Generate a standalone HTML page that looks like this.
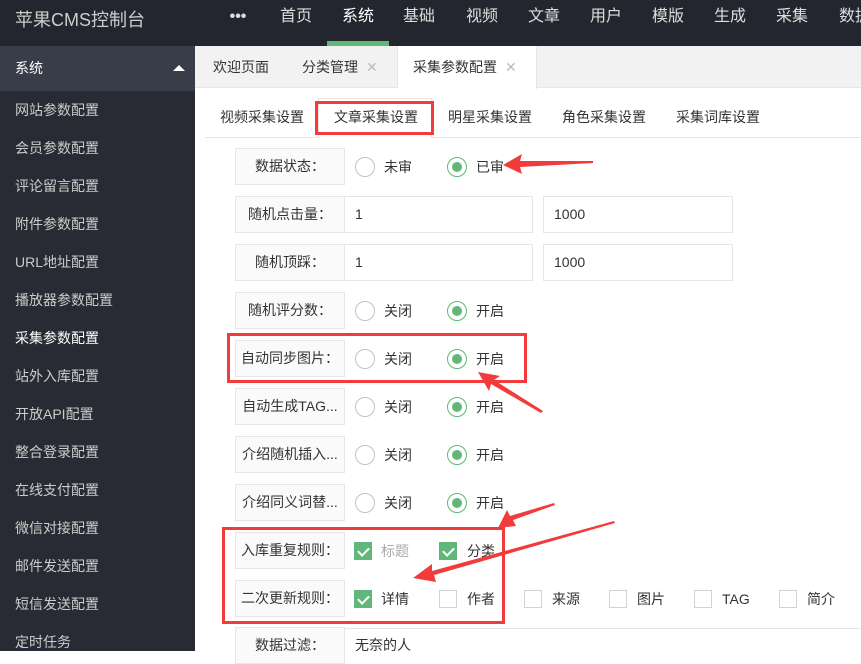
<!DOCTYPE html><html><head><meta charset="utf-8"><style>
*{margin:0;padding:0;box-sizing:border-box}
body{width:861px;height:651px;overflow:hidden;position:relative;background:#fff;font-family:"Liberation Sans","Noto Sans CJK SC",sans-serif;font-size:14px;color:#333}
.top{position:absolute;left:0;top:0;width:861px;height:46px;background:#23262e}
.logo{position:absolute;left:15px;top:6px;color:#ccc;font-size:18px}
.nav{position:absolute;top:0;height:46px;line-height:34px;color:#ddd;font-size:16px;transform:translateX(-50%);white-space:nowrap}
.side{position:absolute;left:0;top:46px;width:195px;height:605px;background:#282b33}
.side .h{height:45px;background:#393d49;color:#fff;padding-left:15px;line-height:45px;font-size:14px}
.side .h:after{content:"";position:absolute;left:173px;top:19px;border:6px solid transparent;border-bottom:6px solid #fff;border-top:0}
.side .i{position:absolute;left:15px;color:#ccc;font-size:14px;line-height:20px}
.tabs{position:absolute;left:195px;top:46px;width:666px;height:42px;background:#f2f2f2;border-bottom:1px solid #e6e6e6}
.tab{position:absolute;top:0;height:42px;line-height:42px;font-size:14px;color:#333}
.x{color:#bbb;margin-left:8px}
.st{position:absolute;top:107px;font-size:14px;color:#333;line-height:20px}
.lbl{position:absolute;left:235px;width:110px;height:37px;border:1px solid #e6e6e6;background:#fafafa;text-align:center;line-height:35px;font-size:14px;white-space:nowrap;overflow:hidden}
.inp{position:absolute;height:37px;border:1px solid #e6e6e6;padding-left:10px;line-height:35px}
.r{position:absolute;width:20px;height:20px;border:1px solid #c2c2c2;border-radius:50%}
.r.on{border-color:#5fb878}.r.on:after{content:"";position:absolute;left:4px;top:4px;width:10px;height:10px;border-radius:50%;background:#5fb878}
.t{position:absolute;font-size:14px;line-height:20px}
.c{position:absolute;width:18px;height:18px;border:1px solid #d2d2d2}
.c.on{background:#5fb878;border-color:#5fb878}
.c.on:after{content:"";position:absolute;left:5px;top:2px;width:5px;height:9px;border:solid #fff;border-width:0 2px 2px 0;transform:rotate(45deg)}
.red{position:absolute;border:3px solid #f23b3b}
</style></head><body>
<div class="top"><div class="logo">苹果CMS控制台</div>
<div class="nav" style="left:238px;font-weight:bold">•••</div>
<div class="nav" style="left:296px">首页</div>
<div class="nav" style="left:358px;color:#fff">系统</div>
<div style="position:absolute;left:327px;top:41px;width:62px;height:5px;background:#5fb878"></div>
<div class="nav" style="left:419px">基础</div>
<div class="nav" style="left:482px">视频</div>
<div class="nav" style="left:544px">文章</div>
<div class="nav" style="left:606px">用户</div>
<div class="nav" style="left:668px">模版</div>
<div class="nav" style="left:730px">生成</div>
<div class="nav" style="left:792px">采集</div>
<div class="nav" style="left:855px">数据</div>
</div>
<div class="side"><div class="h">系统</div>
<div class="i" style="top:54px">网站参数配置</div>
<div class="i" style="top:92px">会员参数配置</div>
<div class="i" style="top:130px">评论留言配置</div>
<div class="i" style="top:168px">附件参数配置</div>
<div class="i" style="top:206px">URL地址配置</div>
<div class="i" style="top:244px">播放器参数配置</div>
<div class="i" style="top:282px;color:#fff">采集参数配置</div>
<div class="i" style="top:320px">站外入库配置</div>
<div class="i" style="top:358px">开放API配置</div>
<div class="i" style="top:396px">整合登录配置</div>
<div class="i" style="top:434px">在线支付配置</div>
<div class="i" style="top:472px">微信对接配置</div>
<div class="i" style="top:510px">邮件发送配置</div>
<div class="i" style="top:548px">短信发送配置</div>
<div class="i" style="top:586px">定时任务</div>
</div>
<div class="tabs">
<div class="tab" style="left:18px">欢迎页面</div>
<div class="tab" style="left:107px">分类管理<span class="x">✕</span></div>
<div class="tab" style="left:202px;width:140px;background:#fff;height:43px;padding-left:15px;border-right:1px solid #e6e6e6;border-left:1px solid #e6e6e6">采集参数配置<span class="x">✕</span></div>
</div>
<div style="position:absolute;left:205px;top:137px;width:656px;height:1px;background:#e6e6e6"></div>
<div style="position:absolute;left:318px;top:98px;width:114px;height:40px;background:#fff;border:1px solid #e6e6e6;border-bottom:none"></div>
<div class="st" style="left:220px">视频采集设置</div>
<div class="st" style="left:334px">文章采集设置</div>
<div class="st" style="left:448px">明星采集设置</div>
<div class="st" style="left:562px">角色采集设置</div>
<div class="st" style="left:676px">采集词库设置</div>
<div class="red" style="left:315px;top:101px;width:119px;height:34px"></div>

<div class="lbl" style="top:148px">数据状态：</div>
<div class="r" style="left:355px;top:157px"></div><div class="t" style="left:384px;top:157px">未审</div>
<div class="r on" style="left:447px;top:157px"></div><div class="t" style="left:476px;top:157px">已审</div>

<div class="lbl" style="top:196px">随机点击量：</div>
<div class="inp" style="left:344px;top:196px;width:189px">1</div>
<div class="inp" style="left:543px;top:196px;width:190px">1000</div>
<div class="lbl" style="top:244px">随机顶踩：</div>
<div class="inp" style="left:344px;top:244px;width:189px">1</div>
<div class="inp" style="left:543px;top:244px;width:190px">1000</div>

<div class="lbl" style="top:292px">随机评分数：</div>
<div class="r" style="left:355px;top:301px"></div><div class="t" style="left:384px;top:301px">关闭</div>
<div class="r on" style="left:447px;top:301px"></div><div class="t" style="left:476px;top:301px">开启</div>
<div class="lbl" style="top:340px">自动同步图片：</div>
<div class="r" style="left:355px;top:349px"></div><div class="t" style="left:384px;top:349px">关闭</div>
<div class="r on" style="left:447px;top:349px"></div><div class="t" style="left:476px;top:349px">开启</div>
<div class="lbl" style="top:388px">自动生成TAG...</div>
<div class="r" style="left:355px;top:397px"></div><div class="t" style="left:384px;top:397px">关闭</div>
<div class="r on" style="left:447px;top:397px"></div><div class="t" style="left:476px;top:397px">开启</div>
<div class="lbl" style="top:436px">介绍随机插入...</div>
<div class="r" style="left:355px;top:445px"></div><div class="t" style="left:384px;top:445px">关闭</div>
<div class="r on" style="left:447px;top:445px"></div><div class="t" style="left:476px;top:445px">开启</div>
<div class="lbl" style="top:484px">介绍同义词替...</div>
<div class="r" style="left:355px;top:493px"></div><div class="t" style="left:384px;top:493px">关闭</div>
<div class="r on" style="left:447px;top:493px"></div><div class="t" style="left:476px;top:493px">开启</div>

<div class="lbl" style="top:532px">入库重复规则：</div>
<div class="c on" style="left:354px;top:542px"></div><div class="t" style="left:381px;top:541px;color:#aaa">标题</div>
<div class="c on" style="left:439px;top:542px"></div><div class="t" style="left:467px;top:541px">分类</div>
<div class="lbl" style="top:580px">二次更新规则：</div>
<div class="c on" style="left:354px;top:590px"></div><div class="t" style="left:381px;top:589px">详情</div>
<div class="c" style="left:439px;top:590px"></div><div class="t" style="left:467px;top:589px">作者</div>
<div class="c" style="left:524px;top:590px"></div><div class="t" style="left:552px;top:589px">来源</div>
<div class="c" style="left:609px;top:590px"></div><div class="t" style="left:637px;top:589px">图片</div>
<div class="c" style="left:694px;top:590px"></div><div class="t" style="left:722px;top:589px">TAG</div>
<div class="c" style="left:779px;top:590px"></div><div class="t" style="left:807px;top:589px">简介</div>
<div style="position:absolute;left:345px;top:628px;width:516px;height:1px;background:#e6e6e6"></div>
<div class="lbl" style="top:627px">数据过滤：</div>
<div class="t" style="left:355px;top:635px">无奈的人</div>

<div class="red" style="left:227px;top:333px;width:300px;height:50px"></div>
<div class="red" style="left:222px;top:527px;width:283px;height:97px"></div>
<svg style="position:absolute;left:0;top:0" width="861" height="651">
<g fill="#f23b3b">
<polygon points="503,165 522,154 520,161 593,161 593,163 520,167 522,174"/>
<polygon points="478,372 500,376 494,380 543,411 541,413 491,384 489,391"/>
<polygon points="498,528 507,510 510,516 554,503 555,505 513,520 516,526"/>
<polygon points="413,578 432,564 432,571 614,521 615,523 434,575 436,582"/>
</g></svg>
</body></html>
